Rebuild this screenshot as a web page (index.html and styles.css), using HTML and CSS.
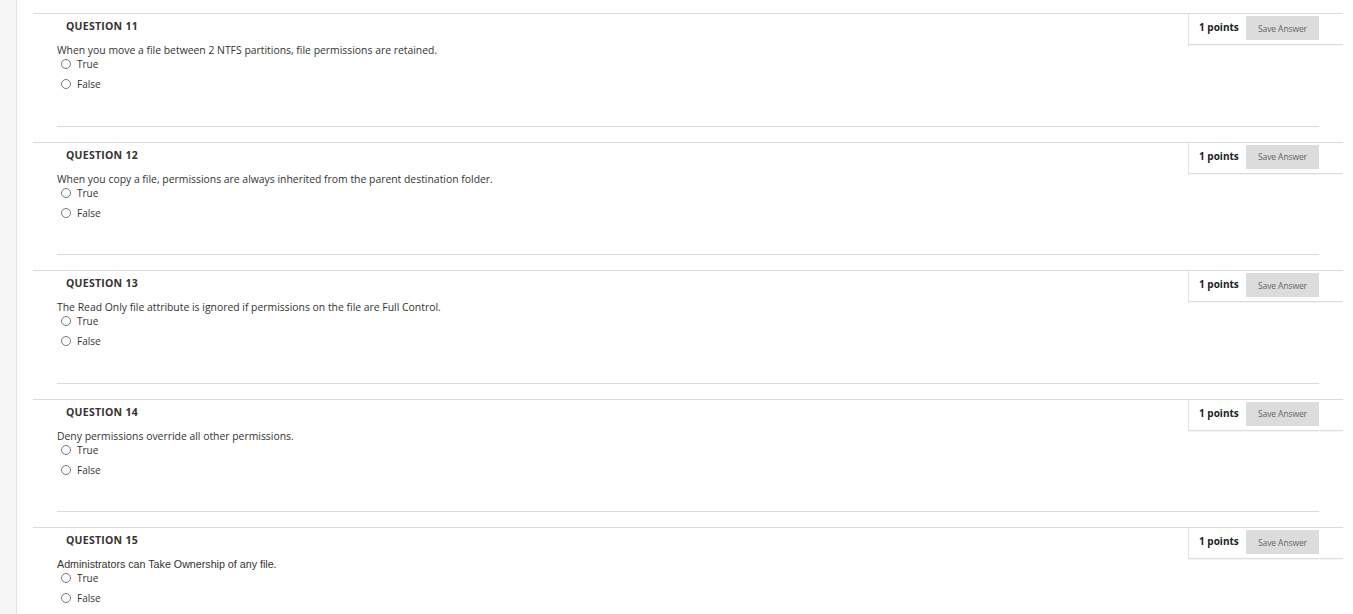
FILE: index.html
```html
<!DOCTYPE html>
<html>
<head>
<meta charset="utf-8">
<link rel="stylesheet" href="styles.css">
</head>
<body>
<div class="page">
  <aside class="rail"></aside>
  <main class="main">
    <section class="question">
      <div class="qhead">
        <h3 class="qtitle">QUESTION 11</h3>
        <div class="points"><span class="pts">1 points</span><button class="save">Save Answer</button></div>
      </div>
      <div class="qbody">
        <p class="qtext">When you move a file between 2 NTFS partitions, file permissions are retained.</p>
        <label class="opt"><span class="radio"></span>True</label>
        <label class="opt"><span class="radio"></span>False</label>
      </div>
      <hr class="sep">
    </section>
    <section class="question">
      <div class="qhead">
        <h3 class="qtitle">QUESTION 12</h3>
        <div class="points"><span class="pts">1 points</span><button class="save">Save Answer</button></div>
      </div>
      <div class="qbody">
        <p class="qtext">When you copy a file, permissions are always inherited from the parent destination folder.</p>
        <label class="opt"><span class="radio"></span>True</label>
        <label class="opt"><span class="radio"></span>False</label>
      </div>
      <hr class="sep">
    </section>
    <section class="question">
      <div class="qhead">
        <h3 class="qtitle">QUESTION 13</h3>
        <div class="points"><span class="pts">1 points</span><button class="save">Save Answer</button></div>
      </div>
      <div class="qbody">
        <p class="qtext">The Read Only file attribute is ignored if permissions on the file are Full Control.</p>
        <label class="opt"><span class="radio"></span>True</label>
        <label class="opt"><span class="radio"></span>False</label>
      </div>
      <hr class="sep">
    </section>
    <section class="question">
      <div class="qhead">
        <h3 class="qtitle">QUESTION 14</h3>
        <div class="points"><span class="pts">1 points</span><button class="save">Save Answer</button></div>
      </div>
      <div class="qbody">
        <p class="qtext">Deny permissions override all other permissions.</p>
        <label class="opt"><span class="radio"></span>True</label>
        <label class="opt"><span class="radio"></span>False</label>
      </div>
      <hr class="sep">
    </section>
    <section class="question">
      <div class="qhead">
        <h3 class="qtitle">QUESTION 15</h3>
        <div class="points"><span class="pts">1 points</span><button class="save">Save Answer</button></div>
      </div>
      <div class="qbody">
        <p class="qtext arial">Administrators can Take Ownership of any file.</p>
        <label class="opt"><span class="radio"></span>True</label>
        <label class="opt"><span class="radio"></span>False</label>
      </div>
    </section>
  </main>
</div>
</body>
</html>
```

FILE: styles.css
```css
html, body {
  margin: 0;
  padding: 0;
  background: #fff;
  height: 100%;
  overflow: hidden;
}
body {
  font-family: "Open Sans", "Liberation Sans", sans-serif;
  color: #333;
}
.page {
  display: flex;
  height: 614px;
}
.rail {
  width: 16px;
  flex: none;
  background: #f6f6f6;
  border-right: 1px solid #e4e4e4;
}
.main {
  flex: 1;
  padding: 13px 10px 0 16px;
  overflow: hidden;
}
.question {
  border-top: 1px solid #dadada;
  height: 127.6px;
  display: flex;
  flex-direction: column;
}
.question:last-child {
  height: auto;
}
.qhead {
  display: flex;
  justify-content: space-between;
  align-items: flex-start;
  height: 29px;
}
.qtitle {
  margin: 5px 0 0 33px;
  font-size: 10.5px;
  line-height: 14px;
  font-weight: 700;
  letter-spacing: 0.25px;
  color: #333;
}
.points {
  width: 155px;
  height: 31px;
  border-left: 1px solid #e2e2e2;
  border-bottom: 1px solid #dcdcdc;
  box-shadow: 0 1px 1px rgba(0,0,0,0.04);
  display: flex;
  align-items: flex-start;
  box-sizing: border-box;
  position: relative;
  z-index: 1;
  background: #fff;
}
.pts {
  font-size: 10px;
  font-weight: 700;
  line-height: 14px;
  margin: 6px 0 0 10px;
  width: 47px;
  color: #222;
}
.save {
  margin: 2px 0 0 0;
  width: 73px;
  height: 24px;
  border: none;
  background: #dcdcdc;
  font-family: "Open Sans", sans-serif;
  font-size: 8.5px;
  color: #666;
  padding: 0;
  letter-spacing: -0.1px;
}
.qbody {
  padding-left: 24px;
  display: flex;
  flex-direction: column;
}
.qtext {
  margin: 0;
  font-size: 10.4px;
  line-height: 14px;
  color: #333;
}
.qtext.arial {
  font-family: "Liberation Sans", Arial, sans-serif;
  font-size: 10.7px;
}
.opt {
  display: flex;
  align-items: center;
  font-size: 10px;
  line-height: 14px;
  height: 14px;
  margin-bottom: 6px;
  padding-left: 4px;
  color: #333;
}
.radio {
  width: 8px;
  height: 8px;
  border: 1px solid #777;
  border-radius: 50%;
  margin-right: 6px;
  box-sizing: content-box;
}
.sep {
  margin: auto 24px 15px 24px;
  border: none;
  border-top: 1px solid #dadada;
  height: 0;
}
```
